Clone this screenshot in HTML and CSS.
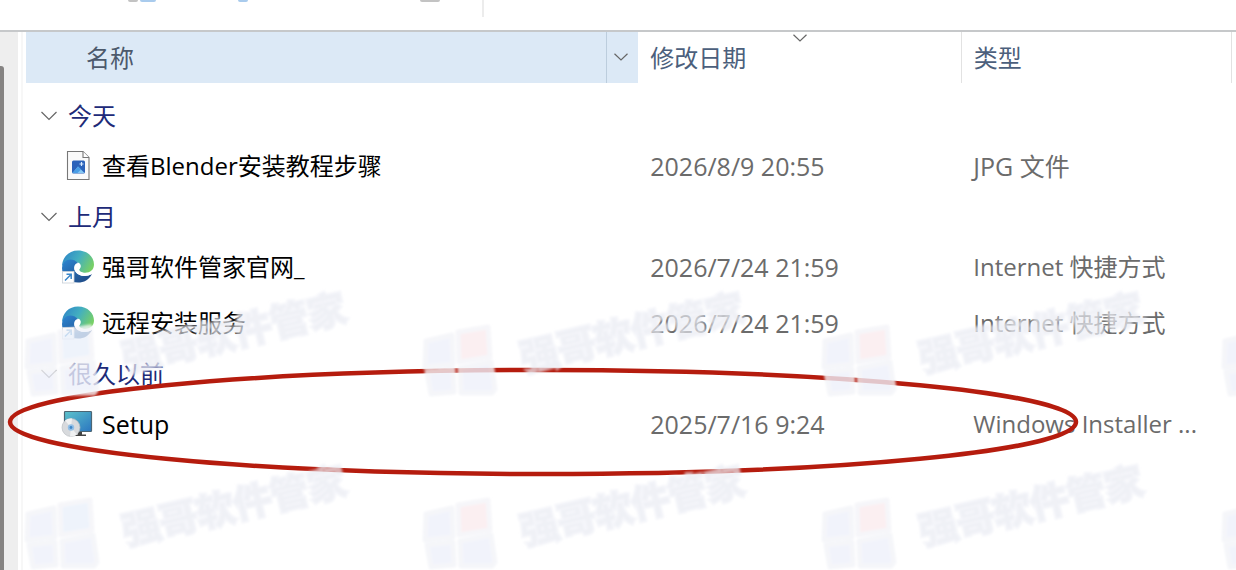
FILE: index.html
```
<!DOCTYPE html>
<html lang="zh-CN">
<head>
<meta charset="utf-8">
<title>文件列表</title>
<link rel="stylesheet" href="styles.css">
</head>
<body>
<div class="window">
  <header class="toolbar" aria-hidden="true">
    <div class="tool tool-split"><span class="chip chip-gray"></span><span class="chip chip-blue"></span></div>
    <div class="tool tool-single"><span class="chip chip-sky"></span></div>
    <div class="tool tool-wide"><span class="chip chip-gray"></span></div>
    <div class="toolbar-rule"></div>
  </header>
  <main class="content">
    <aside class="nav-pane"><div class="scroll-thumb"></div></aside>
    <section class="list">
      <table class="files">
        <colgroup><col class="col-name"><col class="col-date"><col class="col-type"><col></colgroup>
        <thead>
          <tr>
            <th class="head-name"><div class="head-split">
              <button class="head-button head-label" type="button">名称</button>
              <button class="head-button head-menu" type="button" aria-label="筛选"><svg width="14" height="8" viewBox="0 0 14 8"><path class="chevron" d="M0.5 .7 7 7 13.5 .7"/></svg></button>
            </div></th>
            <th class="head-rule"><button class="head-button" type="button">修改日期<svg class="sort-mark" width="14" height="8" viewBox="0 0 14 8"><path class="chevron" d="M0.5 .7 7 7 13.5 .7"/></svg></button></th>
            <th class="head-rule"><button class="head-button" type="button">类型</button></th>
            <th></th>
          </tr>
        </thead>
        <tbody>
          <tr class="group"><td colspan="4"><button class="group-button" type="button"><svg width="16" height="10" viewBox="0 0 16 10"><path class="chevron" d="M.5 1 8 8.500 15.500 1"/></svg>今天</button></td></tr>
          <tr class="file">
            <td><div class="entry"><svg class="icon" width="34" height="34" viewBox="0 0 34 34">
              <path d="M6.500 2.500h15.500l6 6v22h-21.500z" fill="#fafafa" stroke="#777" stroke-width="1.100"/>
              <path d="M22 2.500v6h6" fill="#fff" stroke="#777" stroke-width="1.100"/>
              <rect x="11" y="11.500" width="13" height="13" rx="1.500" fill="#2b62ba"/>
              <path d="M11.500 24 17 17.500 23.500 24z" fill="#84c8f4"/><path d="M11.500 24 17 17.500l3 3-3.500 3.500z" fill="#4a9ee6"/>
              <path d="M20.500 13v4M18.500 15h4" stroke="#d7eaff" stroke-width="1.200"/>
            </svg><span>查看Blender安装教程步骤</span></div></td>
            <td class="latin">2026/8/9 20:55</td><td class="latin">JPG 文件</td><td></td>
          </tr>
          <tr class="group"><td colspan="4"><button class="group-button" type="button"><svg width="16" height="10" viewBox="0 0 16 10"><path class="chevron" d="M.5 1 8 8.500 15.500 1"/></svg>上月</button></td></tr>
          <tr class="file">
            <td><div class="entry"><svg class="icon" width="34" height="34" viewBox="0 0 34 34">
              <defs>
                <linearGradient id="edge-top" x1="0" y1=".2" x2="1" y2=".6"><stop offset="0" stop-color="#2e86c8"/><stop offset=".5" stop-color="#43afc0"/><stop offset="1" stop-color="#78d065"/></linearGradient>
                <linearGradient id="edge-side" x1="0" y1="0" x2=".8" y2="1"><stop offset="0" stop-color="#2d86d2"/><stop offset="1" stop-color="#1f4a86"/></linearGradient>
                <g id="edge">
                  <path d="M1 17C1 7 8 .5 17 .5c10 0 16 7 16 14 0 6-5 9-11 8-3-.5-5-2-3-4 2-3 0-6-3-6-5-4-12-2-15 4z" fill="url(#edge-top)"/>
                  <path d="M1 18C2 9 11 7 17 13c-3 0-5 4-3 8 4 6 11 6 17 3-3 6-8 8.500-14 8.500C8 32.500 1 27 1 18z" fill="url(#edge-side)"/>
                  <path d="M14 16c2-3 5-2 5 .5 0 1.500-1 2-1 3.500 1 3 6 4.500 12.500 3l.5 1c-5 3-13 2.500-16-1.500-1.500-2-2-4-1-6.500z" fill="#fff"/>
                  <rect x="1.500" y="21.500" width="11.500" height="11.500" fill="#fff" stroke="#c9d0d8" stroke-width=".8"/>
                  <path d="M4 30.500 10 24.500M5.500 24.300H10.200V29" fill="none" stroke="#3a86c9" stroke-width="1.500"/>
                </g>
              </defs><use href="#edge"/>
            </svg><span>强哥软件管家官网_</span></div></td>
            <td class="latin">2026/7/24 21:59</td><td>Internet 快捷方式</td><td></td>
          </tr>
          <tr class="file">
            <td><div class="entry"><svg class="icon" width="34" height="34" viewBox="0 0 34 34"><use href="#edge"/></svg><span>远程安装服务</span></div></td>
            <td class="latin">2026/7/24 21:59</td><td>Internet 快捷方式</td><td></td>
          </tr>
          <tr class="group"><td colspan="4"><button class="group-button" type="button"><svg width="16" height="10" viewBox="0 0 16 10"><path class="chevron" d="M.5 1 8 8.500 15.500 1"/></svg>很久以前</button></td></tr>
          <tr class="file">
            <td><div class="entry"><svg class="icon" width="34" height="34" viewBox="0 0 34 34">
              <defs><linearGradient id="screen" x1="0" y1="0" x2="1" y2="1"><stop offset="0" stop-color="#5cc3cc"/><stop offset="1" stop-color="#2b76c0"/></linearGradient></defs>
              <path d="M17 24h4v3.500h4v1.500H13v-1.500h4z" fill="#444"/>
              <rect x="3.500" y="4.500" width="27" height="20" rx=".8" fill="url(#screen)" stroke="#4c6674" stroke-width="1.200"/>
              <circle cx="10" cy="20.500" r="9" fill="#d8dadd" stroke="#b9bdc2" stroke-width=".7"/>
              <path d="M10 20.500 4 13.500a9 9 0 0 1 7-2zM10 20.500l6 7a9 9 0 0 1-7 2z" fill="#f0f1f2"/>
              <circle cx="10" cy="20.500" r="3.200" fill="#93bfe6"/><circle cx="10" cy="20.500" r="1.400" fill="#3f88c9"/>
            </svg><span class="latin">Setup</span></div></td>
            <td class="latin">2025/7/16 9:24</td><td>Windows Installer ...</td><td></td>
          </tr>
        </tbody>
      </table>
    </section>
  </main>
  <svg class="overlay" aria-hidden="true">
    <defs>
      <filter id="soft" x="-10%" y="-10%" width="120%" height="120%"><feGaussianBlur stdDeviation="1.200"/></filter>
      <g id="mark-text"><text class="mark-label" x="0" y="0" transform="translate(100 46) rotate(-13)">强哥软件管家</text></g>
      <g id="mark-panes" class="mark-panes">
        <path d="M2 15 28 9 29 38 1 41z"/><path d="M3 46 29 43 30 66 7 68z"/><path d="M36 42 67 36 71 63 68 67 37 67z"/>
      </g>
      <path id="mark-corner" class="mark-corner" d="M34 6 64 1 66 31 35 36z"/>
    </defs>
    <ellipse class="callout" cx="543" cy="422" rx="533" ry="52"/>
    <g filter="url(#soft)">
      <g transform="translate(26 326)"><use href="#mark-panes"/><use href="#mark-corner" class="cool"/><use href="#mark-text"/></g>
      <g transform="translate(424 326)"><use href="#mark-panes"/><use href="#mark-corner" class="warm"/><use href="#mark-text"/></g>
      <g transform="translate(823 326)"><use href="#mark-panes"/><use href="#mark-corner" class="warm"/><use href="#mark-text"/></g>
      <g transform="translate(1223 326)"><use href="#mark-panes"/></g>
      <g transform="translate(26 499)"><use href="#mark-panes"/><use href="#mark-corner" class="cool"/><use href="#mark-text"/></g>
      <g transform="translate(424 499)"><use href="#mark-panes"/><use href="#mark-corner" class="warm"/><use href="#mark-text"/></g>
      <g transform="translate(823 499)"><use href="#mark-panes"/><use href="#mark-corner" class="warm"/><use href="#mark-text"/></g>
      <g transform="translate(1223 499)"><use href="#mark-panes"/></g>
    </g>
  </svg>
</div>
</body>
</html>
```
FILE: styles.css
```
* { box-sizing: border-box; }

body {
  margin: 0;
  background: #fff;
  color: #6b6b6b;
  font: 24px/32px "Open Sans", "Noto Sans CJK SC", sans-serif;
}

.window {
  position: relative;
  display: flex;
  flex-direction: column;
  min-height: 100vh;
  overflow: hidden;
}

.toolbar {
  display: flex;
  align-items: flex-start;
  height: 32px;
  padding-left: 128px;
  border-bottom: 2px solid #c6c8ca;
}

.tool { display: flex; gap: 2px; }
.tool-split { width: 110px; }
.tool-single { width: 182px; }
.tool-wide { width: 62px; }
.chip { width: 10px; height: 2px; border-radius: 0 0 3px 3px; }
.chip-gray { background: #c3c3c3; }
.chip-blue { width: 16px; background: #a9cbed; }
.chip-sky { background: #a9cbed; }
.tool-wide .chip { width: 20px; }
.toolbar-rule { width: 2px; height: 17px; background: #ececec; }

.content { display: flex; flex: 1; }

.nav-pane {
  display: flex;
  flex: none;
  width: 18px;
  padding-top: 34px;
  background: #eee;
}

.scroll-thumb { width: 4px; border-radius: 0 3px 0 0; background: #858382; }

.list {
  flex: 1;
  min-width: 0;
  margin-left: 3px;
  padding-left: 3px;
  border-left: 2px solid #f7f7f7;
}

.files { width: 100%; border-collapse: collapse; table-layout: fixed; }
.col-name { width: 50.6%; }
.col-date { width: 26.7%; }
.col-type { width: 22.3%; }

th, td {
  padding: 0;
  font-weight: 400;
  text-align: left;
  white-space: nowrap;
}

th { height: 51px; color: #4c5f7c; }
.head-name { background: #dce9f6; }
.head-rule { border-right: 1px solid #e2e2e2; }
.head-split { display: flex; }

.head-button {
  position: relative;
  display: block;
  width: 100%;
  height: 51px;
  padding: 0 0 0 12px;
  border: 0;
  background: none;
  color: inherit;
  font: inherit;
  text-align: left;
}

.head-label { flex: 1; padding-left: 60px; color: #4c596c; }

.head-menu {
  display: flex;
  flex: none;
  align-items: center;
  justify-content: center;
  width: 32px;
  padding: 0 4px 2px 0;
  border-left: 1px solid #bccddd;
}

.sort-mark { position: absolute; top: 2px; left: calc(50% - 7px); }
.chevron { fill: none; stroke: #666; stroke-width: 1.2; }

tbody::before { content: ""; display: block; height: 10px; }
.group td { height: 45px; }
.file td { height: 56px; }
.file td + td { padding-left: 12px; }

.group-button {
  display: flex;
  align-items: center;
  gap: 11px;
  padding: 0 0 0 15px;
  border: 0;
  background: none;
  color: #202a78;
  font: inherit;
}

.entry {
  display: flex;
  align-items: center;
  gap: 7px;
  padding-left: 35px;
  color: #000;
}

.icon { flex: none; }
.latin { font-size: 25px; }

.overlay {
  position: absolute;
  inset: 0;
  width: 100%;
  height: 100%;
  pointer-events: none;
}

.callout { fill: none; stroke: #b51c0e; stroke-width: 4.5; }

.mark-label {
  fill: #e6e8f0;
  fill-opacity: .5;
  stroke: #eceef5;
  stroke-opacity: .55;
  stroke-width: 4;
  font-family: "Noto Sans CJK SC", sans-serif;
  font-size: 38px;
  font-weight: 700;
}

.mark-panes { fill: #eef1fb; stroke: #f3f4f8; stroke-width: 5; stroke-linejoin: round; opacity: .8; }
.mark-corner { stroke: #f4f4f8; stroke-width: 5; stroke-linejoin: round; opacity: .8; }
.cool { fill: #eaf1fb; }
.warm { fill: #fbebee; }
```
